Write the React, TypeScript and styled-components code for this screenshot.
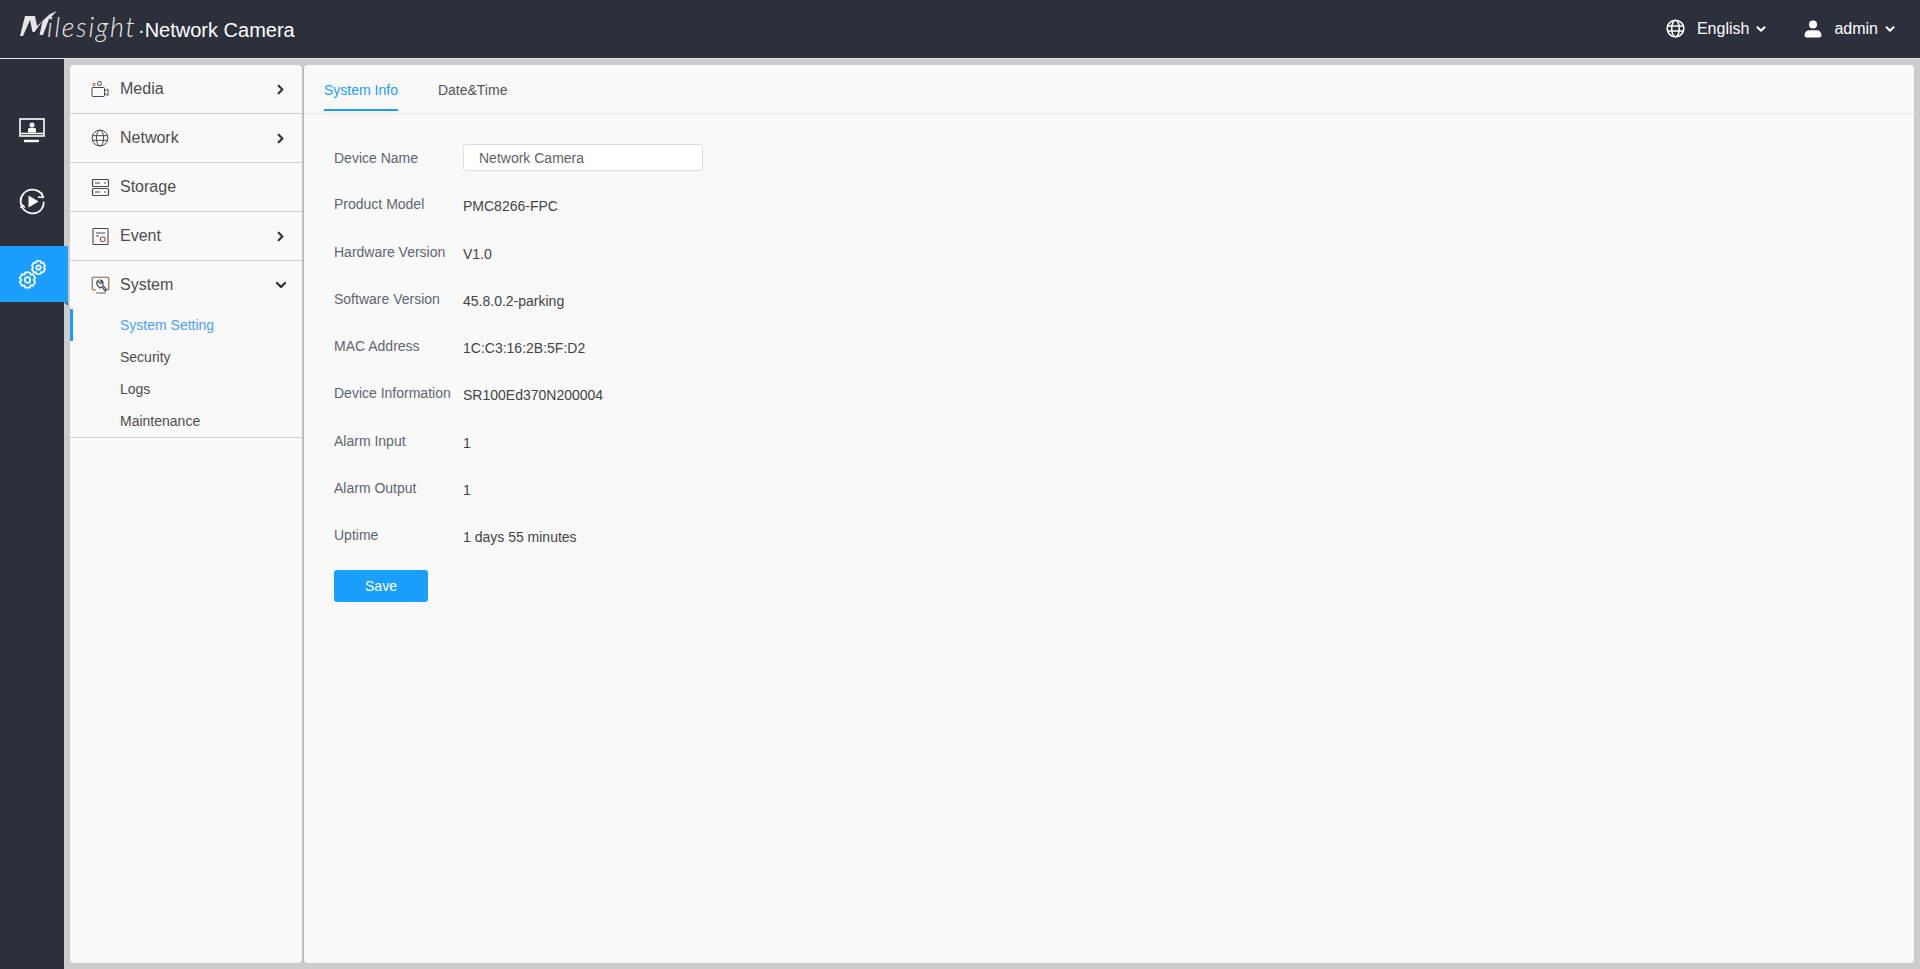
import styled, { createGlobalStyle } from 'styled-components'
import { ChevronDown, ChevronRight } from 'lucide-react'

const GlobalStyle = createGlobalStyle`
  html, body {
    margin: 0;
    padding: 0;
    height: 100%;
    overflow: hidden;
    font-family: "Liberation Sans", Arial, sans-serif;
    background: #cccccc;
  }
  * { box-sizing: border-box; }
`

const Page = styled.div`
  width: 100%;
  height: 969px;
  display: flex;
  flex-direction: column;
  background: #cccccc;
`

const Header = styled.header`
  height: 59px;
  flex: none;
  display: flex;
  align-items: center;
  justify-content: space-between;
  padding: 0 23px 1px 20px;
  background: #2b303a;
  border-bottom: 1px solid #e4e4e4;
  color: #ffffff;
`

const Brand = styled.div`
  display: flex;
  align-items: center;
`

const LogoWord = styled.div`
  display: flex;
  align-items: flex-end;
  width: 114px;
  height: 34px;
  color: #e6e6e6;
`

const LogoText = styled.span`
  margin-left: -11px;
  padding-bottom: 3px;
  font-family: "Lato", sans-serif;
  font-size: 27px;
  font-weight: 300;
  font-style: italic;
  line-height: 32px;
  letter-spacing: 1.7px;
  white-space: nowrap;
`

const ProductName = styled.span`
  margin-left: 4px;
  font-size: 20px;
  line-height: 24px;
  padding-top: 3px;
`

const HeaderMenus = styled.div`
  display: flex;
  align-items: center;
  gap: 36px;
`

const HeaderMenu = styled.div`
  display: flex;
  align-items: center;
  gap: 12px;
  font-size: 16px;

  > svg:last-child { margin-left: -7px; }
`

const Body = styled.div`
  flex: 1;
  min-height: 0;
  display: flex;
`

const Rail = styled.nav`
  width: 64px;
  flex: none;
  background: #2b303a;
  padding-top: 36px;
  display: flex;
  flex-direction: column;
`

const RailItem = styled.div<{ $active?: boolean }>`
  position: relative;
  width: ${p => (p.$active ? 68 : 64)}px;
  height: ${p => (p.$active ? 56 : 71)}px;
  margin-top: ${p => (p.$active ? 9 : 0)}px;
  display: flex;
  align-items: center;
  justify-content: center;
  padding-right: ${p => (p.$active ? 4 : 0)}px;
  color: #ffffff;
  background: ${p => (p.$active ? '#1a9fff' : 'transparent')};

  ${p =>
    p.$active &&
    `
    &::after {
      content: "";
      position: absolute;
      right: 0;
      bottom: -4px;
      border-top: 4px solid #1478c2;
      border-left: 4px solid transparent;
    }
  `}
`

const Panels = styled.div`
  flex: 1;
  min-width: 0;
  display: flex;
  padding: 6px;
  gap: 2px;
`

const Menu = styled.aside`
  width: 232px;
  flex: none;
  background: #f9f9f9;
  border-radius: 4px;
  box-shadow: 2px 0 0 #bdbdbd;
`

const MenuRow = styled.div<{ $open?: boolean }>`
  height: ${p => (p.$open ? 48 : 49)}px;
  display: flex;
  align-items: center;
  padding: 0 14px 0 21px;
  font-size: 16px;
  color: #4d4d4d;
  border-bottom: ${p => (p.$open ? 'none' : '1px solid #cfcfcf')};
`

const MenuIcon = styled.span`
  width: 19px;
  height: 19px;
  margin-right: 10px;
  flex: none;
  display: flex;
  color: #444a55;
`

const MenuLabel = styled.span`
  flex: 1;
`

const OpenChevron = styled(ChevronDown)`
  margin-right: -1px;
`

const SubMenu = styled.div`
  height: 129px;
  border-bottom: 1px solid #cfcfcf;
`

const SubItem = styled.div<{ $active?: boolean }>`
  height: 32px;
  display: flex;
  align-items: center;
  padding-left: ${p => (p.$active ? 47 : 50)}px;
  font-size: 14px;
  color: ${p => (p.$active ? '#4a9fff' : '#4d4d4d')};
  border-left: ${p => (p.$active ? '3px solid #1a9fff' : 'none')};
`

const Content = styled.main`
  flex: 1;
  min-width: 0;
  background: #f9f9f9;
  border-radius: 4px;
`

const Tabs = styled.div`
  height: 49px;
  display: flex;
  gap: 40px;
  padding-left: 20px;
  border-bottom: 1px solid #e6e8ee;
`

const Tab = styled.div<{ $active?: boolean }>`
  height: 46px;
  display: flex;
  align-items: center;
  padding-top: 5px;
  font-size: 14px;
  color: ${p => (p.$active ? '#1a9fff' : '#555555')};
  border-bottom: 2px solid ${p => (p.$active ? '#1a9fff' : 'transparent')};
`

const Form = styled.div`
  padding: 30px 0 0 30px;
`

const Row = styled.div`
  height: 47.25px;
  display: grid;
  grid-template-columns: 129px 1fr;
  font-size: 14px;
`

const Label = styled.div`
  color: #5f6570;
  height: 27px;
  display: flex;
  align-items: center;
  white-space: nowrap;
`

const InfoLabel = styled(Label)`
  padding-bottom: 1px;
`

const Value = styled.div`
  color: #444444;
  height: 27px;
  padding-top: 3px;
  display: flex;
  align-items: center;
`

const TextInput = styled.input`
  width: 240px;
  height: 27px;
  padding: 0 15px;
  font: inherit;
  color: #606266;
  background: #ffffff;
  border: 1px solid #dcdfe6;
  border-radius: 3px;
  outline: none;
`

const SaveButton = styled.button`
  display: block;
  width: 94px;
  height: 32px;
  margin-top: 1px;
  border: none;
  border-radius: 3px;
  background: #1a9fff;
  color: #ffffff;
  font: inherit;
  font-size: 14px;
`

const MilesightMark = () => (
  <svg width="38" height="30" viewBox="0 0 38 30" style={{ flex: 'none', marginBottom: 8 }}>
    <path d="M0 28L5 8L15 8L17 18L30 6L37 3L29 11L23 27L19.500 27L22.500 13L14.500 24L12.500 24L10 12L3 28Z" fill="currentColor" />
  </svg>
)

const GlobeIcon = ({ size, weight }: { size: number; weight: number }) => (
  <svg width={size} height={size} viewBox="0 0 20 20" fill="none" stroke="currentColor" strokeWidth={weight}>
    <circle cx="10" cy="10" r="8.800" />
    <ellipse cx="10" cy="10" rx="4" ry="8.800" />
    <path d="M1.200 7.400h17.600M1.200 12.600h17.600" />
  </svg>
)

const UserIcon = () => (
  <svg width="18" height="18" viewBox="0 0 18 18" fill="currentColor">
    <circle cx="9" cy="4.600" r="4" />
    <path d="M0.600 15.500c0-3.400 2.400-5.200 5-5.200h6.800c2.600 0 5 1.800 5 5.200 0 1.300-1 2-2 2H2.600c-1 0-2-.7-2-2z" />
  </svg>
)

const MonitorIcon = () => (
  <svg width="26" height="25" viewBox="0 0 26 25" fill="none">
    <rect x="1" y="1" width="24" height="17" stroke="currentColor" strokeWidth="1.600" />
    <circle cx="13" cy="7" r="2.500" fill="currentColor" />
    <path d="M9 14.500V11.500c0-1 .8-1.500 1.500-1.500h5c.7 0 1.500.5 1.500 1.500v3z" fill="currentColor" />
    <path d="M1 15.500h24" stroke="currentColor" strokeWidth="1.500" />
    <path d="M5 23h15" stroke="currentColor" strokeWidth="2.400" />
  </svg>
)

const PlaybackIcon = () => (
  <svg width="27" height="27" viewBox="0 0 27 27" fill="none" stroke="currentColor" strokeWidth="1.800">
    <path d="M24.500 9.500A11.800 11.800 0 0 0 5 5.200" />
    <path d="M2.500 17.500A11.800 11.800 0 0 0 22 21.800" />
    <path d="M5 5.200A11.800 11.800 0 0 0 2.500 17.500M22 21.800a11.800 11.800 0 0 0 2.800-8" />
    <path d="M22.500 4.500l1.500 5-5-.5M1.500 20l2-3 2.500 2.500" strokeWidth="1.400" />
    <path d="M9.500 7.500L19.500 13.500L9.500 19.500Z" fill="currentColor" stroke="none" />
  </svg>
)

const gearPath = (cx: number, cy: number, r: number) => {
  const points: string[] = []
  for (let i = 0; i < 6; i++) {
    const a = (Math.PI / 3) * i - Math.PI / 2
    const w = 0.3
    const inner = r * 0.76
    points.push(`${cx + inner * Math.cos(a - 0.52)},${cy + inner * Math.sin(a - 0.52)}`)
    points.push(`${cx + r * Math.cos(a - w)},${cy + r * Math.sin(a - w)}`)
    points.push(`${cx + r * Math.cos(a + w)},${cy + r * Math.sin(a + w)}`)
  }
  return `M${points.join('L')}Z`
}

const GearsIcon = () => (
  <svg width="28" height="29" viewBox="0 0 28 29" fill="none" stroke="currentColor" strokeWidth="1.700" strokeLinejoin="round">
    <path d={gearPath(9.500, 20, 8)} />
    <circle cx="9.500" cy="20" r="2.800" />
    <path d={gearPath(20.500, 7.500, 6.800)} />
    <circle cx="20.500" cy="7.500" r="2.200" />
  </svg>
)

const MediaIcon = () => (
  <svg viewBox="0 0 19 19" width="19" height="19" fill="none" stroke="currentColor" strokeWidth="1">
    <rect x="1" y="7.500" width="12.500" height="9" rx="0.800" stroke="#3d4a5c" />
    <path d="M13.500 11l3.500-2v6.500l-3.500-2z" stroke="#6b4a2f" />
    <circle cx="3" cy="4.500" r="1.300" stroke="#8a6a3c" />
    <circle cx="8.500" cy="3.500" r="2" stroke="#4a4a4a" />
  </svg>
)

const StorageIcon = () => (
  <svg viewBox="0 0 19 19" width="19" height="19" fill="none" stroke="currentColor" strokeWidth="1.200">
    <rect x="1.500" y="1.500" width="16" height="7" rx="1" />
    <rect x="1.500" y="10.500" width="16" height="7" rx="1" />
    <path d="M4 5h5M13 5h2M4 14h5M13 14h2" strokeWidth="1" />
  </svg>
)

const EventIcon = () => (
  <svg viewBox="0 0 19 19" width="19" height="19" fill="none" stroke="currentColor" strokeWidth="1.100">
    <rect x="2" y="1.500" width="15" height="16" rx="0.800" />
    <path d="M5 6h9M5 9h3" />
    <rect x="9.500" y="10" width="4.500" height="4.500" rx="1.500" stroke="#8a5a2c" />
  </svg>
)

const SystemIcon = () => (
  <svg viewBox="0 0 19 19" width="19" height="19" fill="none" stroke="currentColor" strokeWidth="1.100">
    <path d="M5 14H2.500c-.8 0-1.300-.5-1.300-1.200V2.500c0-.7.500-1.200 1.300-1.200h14c.8 0 1.300.5 1.300 1.200v10.300c0 .7-.5 1.200-1.300 1.200H15" stroke="#8a6238" />
    <path d="M5 17h10" stroke="#6e6e6e" />
    <path d="M7 4.500a3.300 3.300 0 0 0-.8 4l-.2.4L9 12l1.800-1 1.200 1.200 2 2.800 1.500-1.500-3-3-.8-1.500a3.300 3.300 0 0 0-2.200-4.800L11 6.300 9.500 7.500 8 6.300z" strokeWidth="1.200" />
  </svg>
)

const infoRows = [
  ['Product Model', 'PMC8266-FPC'],
  ['Hardware Version', 'V1.0'],
  ['Software Version', '45.8.0.2-parking'],
  ['MAC Address', '1C:C3:16:2B:5F:D2'],
  ['Device Information', 'SR100Ed370N200004'],
  ['Alarm Input', '1'],
  ['Alarm Output', '1'],
  ['Uptime', '1 days 55 minutes'],
]

const App = () => {
  return (
    <Page>
      <GlobalStyle />
      <Header>
        <Brand>
          <LogoWord>
            <MilesightMark />
            <LogoText>ilesight</LogoText>
          </LogoWord>
          <ProductName>·Network Camera</ProductName>
        </Brand>
        <HeaderMenus>
          <HeaderMenu>
            <GlobeIcon size={19} weight={1.6} />
            English
            <ChevronDown size={14} strokeWidth={3.5} />
          </HeaderMenu>
          <HeaderMenu>
            <UserIcon />
            admin
            <ChevronDown size={14} strokeWidth={3.5} />
          </HeaderMenu>
        </HeaderMenus>
      </Header>
      <Body>
        <Rail>
          <RailItem><MonitorIcon /></RailItem>
          <RailItem><PlaybackIcon /></RailItem>
          <RailItem $active><GearsIcon /></RailItem>
        </Rail>
        <Panels>
          <Menu>
            <MenuRow>
              <MenuIcon><MediaIcon /></MenuIcon>
              <MenuLabel>Media</MenuLabel>
              <ChevronRight size={15} strokeWidth={3.5} color="#333" />
            </MenuRow>
            <MenuRow>
              <MenuIcon><GlobeIcon size={18} weight={1.1} /></MenuIcon>
              <MenuLabel>Network</MenuLabel>
              <ChevronRight size={15} strokeWidth={3.5} color="#333" />
            </MenuRow>
            <MenuRow>
              <MenuIcon><StorageIcon /></MenuIcon>
              <MenuLabel>Storage</MenuLabel>
            </MenuRow>
            <MenuRow>
              <MenuIcon><EventIcon /></MenuIcon>
              <MenuLabel>Event</MenuLabel>
              <ChevronRight size={15} strokeWidth={3.5} color="#333" />
            </MenuRow>
            <MenuRow $open>
              <MenuIcon><SystemIcon /></MenuIcon>
              <MenuLabel>System</MenuLabel>
              <OpenChevron size={16} strokeWidth={3.5} color="#333" />
            </MenuRow>
            <SubMenu>
              <SubItem $active>System Setting</SubItem>
              <SubItem>Security</SubItem>
              <SubItem>Logs</SubItem>
              <SubItem>Maintenance</SubItem>
            </SubMenu>
          </Menu>
          <Content>
            <Tabs>
              <Tab $active>System Info</Tab>
              <Tab>Date&amp;Time</Tab>
            </Tabs>
            <Form>
              <Row>
                <Label>Device Name</Label>
                <div><TextInput defaultValue="Network Camera" /></div>
              </Row>
              {infoRows.map(([label, value]) => (
                <Row key={label}>
                  <InfoLabel>{label}</InfoLabel>
                  <Value>{value}</Value>
                </Row>
              ))}
              <SaveButton>Save</SaveButton>
            </Form>
          </Content>
        </Panels>
      </Body>
    </Page>
  )
}

export default App
